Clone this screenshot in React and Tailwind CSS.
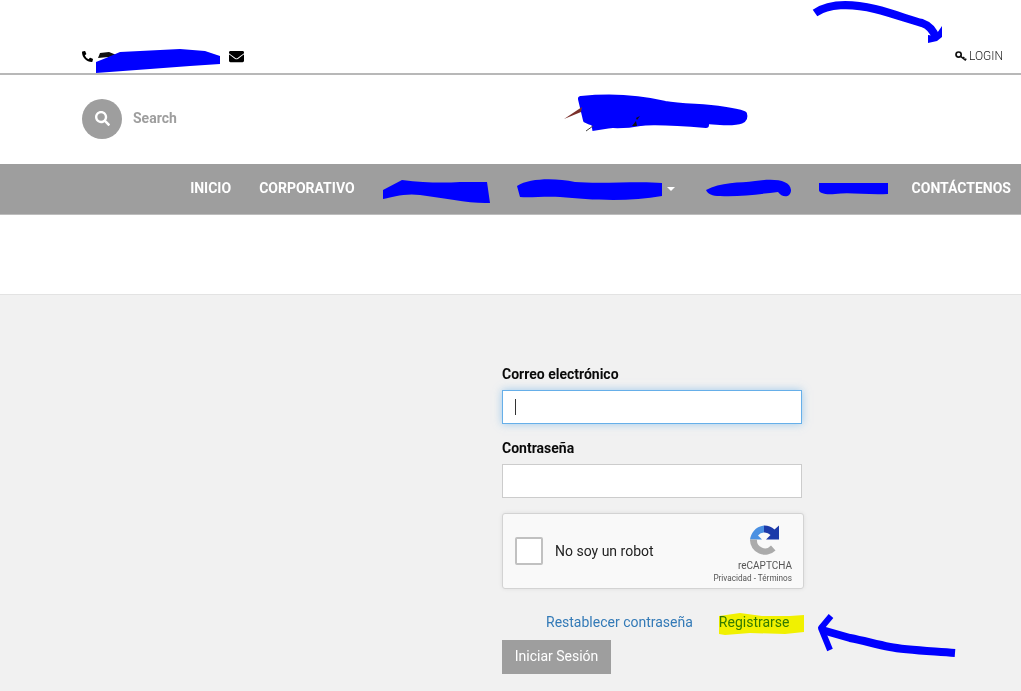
import React from "react";
import { FaPhoneAlt, FaEnvelope, FaSearch } from "react-icons/fa";

const NAV_BLANKS = {
  servicios: "w-[105px]",
  productos: "w-[148px]",
  noticias: "w-[88px]",
  galeria: "w-[65px]",
};

function KeyIcon() {
  return (
    <svg width="12" height="11" viewBox="0 0 12 11" className="mr-[2px]">
      <circle cx="3.6" cy="3.6" r="2.6" fill="none" stroke="#111" strokeWidth="1.7" />
      <path d="M5.6 5.4 L10.8 9.4 M8.2 7.4 L9.2 6 M10.2 9 L11.2 7.6" fill="none" stroke="#111" strokeWidth="1.5" />
    </svg>
  );
}

function RecaptchaLogo() {
  return (
    <svg width="30" height="31" viewBox="0 0 30 30">
      <path d="M14 0 V7 A8 8 0 0 0 8 10 L12 14 H0 C1 8 5 1 14 0 Z" fill="#4a90e2" />
      <path d="M14 0 A15 15 0 0 1 24.5 4 L29 0 V14 H16 L20.5 9.5 A8 8 0 0 0 14 7 Z" fill="#1c3aa9" />
      <path d="M0 14 H7 A8 8 0 0 0 21 20 L25.5 25 A15 15 0 0 1 0 14 Z" fill="#ababab" />
    </svg>
  );
}

function Annotations() {
  return (
    <>
      <svg className="absolute left-0 top-0 mix-blend-multiply" width="1021" height="691">
        <path d="M719 616 L740 613 L762 616 L790 616 L804 615 L804 632 L785 634 L750 633 L725 635 L719 634 Z" fill="#ffff00" />
      </svg>
      <svg className="absolute left-0 top-0" width="1021" height="691" fill="none" stroke="#0000ff" strokeLinecap="butt" strokeLinejoin="round">
        {/* telefono */}
        <path d="M98 58 L100 53 L109 52 L119 56 Z" fill="#111" stroke="none" />
        <path d="M96 73 L96 62 L106 58 L120 52 L180 49 L205 51 L220 56 L220 64 L190 66 L150 69 Z" fill="#0000ff" stroke="none" />
        {/* flecha login */}
        <path d="M815 13 C828 4 850 3 875 9 C895 14 910 20 922 23 C931 26 934 32 936 38" strokeWidth="8" />
        <path d="M928 43 L928 35 L935 36 L942 26 L942 37 L937 41 Z" fill="#0000ff" stroke="none" />
        {/* logo */}
        <path d="M581 99 C610 96 640 98 665 104 C690 108 720 106 744 114 C746 120 742 123 720 122 C690 120 660 118 640 123 C620 127 595 125 586 120 Z" fill="#0000ff" stroke="#0000ff" strokeWidth="6" />
        <path d="M586 104 C620 100 650 112 706 121 L706 125 C670 122 640 120 592 128" strokeWidth="6" />
        <path d="M564 119 L582 107 L581 112 Z" fill="#7a2f2a" stroke="none" />
        <path d="M586 131 L593 126" stroke="#444" strokeWidth="1" />
        <path d="M632 126 L636 121 L637 126 Z M636 118 L640 116 L637 120 Z" fill="#111" stroke="none" />
        {/* menu */}
        <path d="M383 190 L402 180 C425 183 445 183 460 182 L487 182 L490 203 C470 204 445 198 420 195 C405 193 392 197 383 199 Z" fill="#0000ff" stroke="none" />
        <path d="M517 186 C530 178 555 178 575 182 C600 184 640 181 662 183 L662 196 C630 202 590 200 560 197 C545 196 530 198 520 197 Z" fill="#0000ff" stroke="none" />
        <path d="M706 190 C720 182 740 183 755 181 C775 178 790 180 791 190 C791 198 782 198 778 192 C760 194 740 197 720 196 C712 196 708 194 706 190 Z" fill="#0000ff" stroke="none" />
        <path d="M819 183 L888 183 L888 194 C865 195 850 192 835 194 C825 195 819 193 819 190 Z" fill="#0000ff" stroke="none" />
        {/* flecha registrarse */}
        <path d="M955 653 C930 651 905 650 890 647 C875 644 865 641 850 638 L822 630" strokeWidth="8" />
        <path d="M831 616 L821 628 L830 650" strokeWidth="6" />
      </svg>
    </>
  );
}

export default function App() {
  return (
    <div className="relative min-h-[691px] w-[1021px] overflow-hidden bg-[#f1f1f1] font-['Roboto',sans-serif]">
      <div className="flex h-[75px] items-end justify-between border-b-2 border-[#b8b8b8] bg-white pb-[8px] pl-[82px] pr-[18px]">
        <div className="mb-[1px] flex items-center">
          <FaPhoneAlt className="text-[11px] text-black" />
          <div className="w-[136px]" />
          <FaEnvelope className="text-[15px] text-black" />
        </div>
        <div className="flex items-center text-[12px] font-light text-[#222]">
          <KeyIcon />
          LOGIN
        </div>
      </div>

      <div className="flex h-[89px] items-center bg-white pb-[2px] pl-[82px]">
        <div className="flex h-10 w-10 items-center justify-center rounded-full bg-[#9e9e9e]">
          <FaSearch className="text-[15px] text-white" />
        </div>
        <span className="ml-[11px] text-[14px] font-bold text-[#9e9e9e]">Search</span>
      </div>

      <nav className="flex h-[51px] items-center justify-end gap-[28px] border-b border-[#bdbdbd] bg-[#9e9e9e] pb-[1px] pr-[10px] text-[14px] font-bold text-white">
        <span>INICIO</span>
        <span>CORPORATIVO</span>
        <span className={NAV_BLANKS.servicios} />
        <span className="flex items-center">
          <span className={NAV_BLANKS.productos} />
          <span className="ml-[3px] h-0 w-0 border-x-4 border-t-4 border-x-transparent border-t-white" />
        </span>
        <span className={NAV_BLANKS.noticias} />
        <span className={NAV_BLANKS.galeria} />
        <span>CONTÁCTENOS</span>
      </nav>

      <div className="h-[80px] border-b border-[#e3e3e3] bg-white" />

      <main className="pl-[502px] pt-[69px]">
        <div className="w-[300px]">
          <label className="block text-[14px] font-bold leading-5 text-[#0a0a0a]">Correo electrónico</label>
          <div className="mt-[6px] flex h-[34px] items-center border border-[#66afe9] bg-white pl-3 shadow-[0_0_8px_rgba(102,175,233,0.6)]">
            <span className="h-[16px] w-px bg-[#333]" />
          </div>
          <label className="mt-[14px] block text-[14px] font-bold leading-5 text-[#0a0a0a]">Contraseña</label>
          <div className="mt-[6px] h-[34px] border border-[#ccc] bg-white" />
        </div>

        <div className="mt-[15px] flex h-[76px] w-[302px] items-center justify-between rounded-[3px] border border-[#d3d3d3] bg-[#f9f9f9] pl-3 pr-[11px] shadow-[0_0_4px_rgba(0,0,0,0.08)]">
          <div className="flex items-center">
            <div className="h-7 w-7 rounded-[2px] border-2 border-[#c1c1c1] bg-white" />
            <span className="ml-3 text-[14px] text-[#222]">No soy un robot</span>
          </div>
          <div className="mt-[6px] flex flex-col items-end">
            <span className="mr-[12px]">
              <RecaptchaLogo />
            </span>
            <span className="mt-[4px] text-[10px] leading-3 text-[#555]">reCAPTCHA</span>
            <span className="mt-[1px] text-[8.2px] leading-[10px] text-[#555]">Privacidad - Términos</span>
          </div>
        </div>

        <div className="mt-[23px] flex gap-[26px] pl-[44px] text-[14px] leading-5">
          <a className="text-[#337ab7]">Restablecer contraseña</a>
          <a className="text-[#337ab7]">Registrarse</a>
        </div>
        <button className="mt-2 h-[34px] w-[109px] bg-[#9e9e9e] pb-[2px] text-[14px] text-white">Iniciar Sesión</button>
      </main>

      <Annotations />
    </div>
  );
}
